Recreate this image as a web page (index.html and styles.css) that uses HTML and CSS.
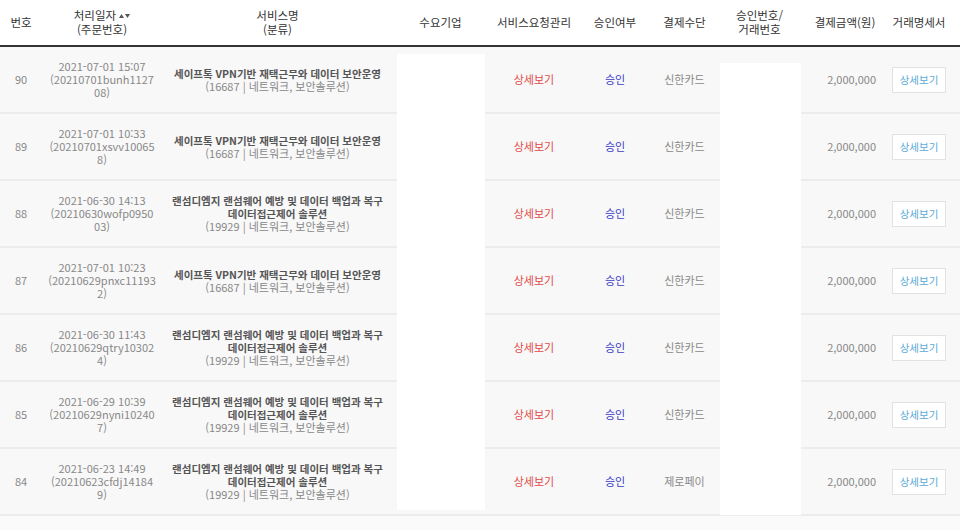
FILE: index.html
```html
<!DOCTYPE html>
<html lang="ko">
<head>
<meta charset="utf-8">
<title>주문 목록</title>
<link rel="stylesheet" href="styles.css">
</head>
<body>
<div class="wrap">
  <table class="list">
    <colgroup>
      <col class="c-no"><col class="c-date"><col class="c-svc"><col class="c-corp"><col class="c-req">
      <col class="c-ok"><col class="c-pay"><col class="c-appr"><col class="c-amt"><col class="c-doc">
    </colgroup>
    <thead>
      <tr>
        <th>번호</th>
        <th>처리일자 <span class="sort"><svg width="5" height="4" viewBox="0 0 5 4"><path d="M0 4L2.5 0L5 4Z"/></svg><svg width="5" height="4" viewBox="0 0 5 4"><path d="M0 0L2.5 4L5 0Z"/></svg></span><br>(주문번호)</th>
        <th>서비스명<br>(분류)</th>
        <th>수요기업</th>
        <th>서비스요청관리</th>
        <th>승인여부</th>
        <th>결제수단</th>
        <th>승인번호/<br>거래번호</th>
        <th>결제금액(원)</th>
        <th class="doc">거래명세서</th>
      </tr>
    </thead>
    <tbody>
      <tr>
        <td class="num">90</td>
        <td class="date">2021-07-01 15:07<br>(20210701bunh1127<br>08)</td>
        <td class="svc"><strong>세이프톡 VPN기반 재택근무와 데이터 보안운영</strong><br>(16687 | 네트워크, 보안솔루션)</td>
        <td></td>
        <td><a class="red">상세보기</a></td>
        <td><span class="blue">승인</span></td>
        <td class="gray">신한카드</td>
        <td></td>
        <td class="amt">2,000,000</td>
        <td class="doc"><button class="btn">상세보기</button></td>
      </tr>
      <tr>
        <td class="num">89</td>
        <td class="date">2021-07-01 10:33<br>(20210701xsvv10065<br>8)</td>
        <td class="svc"><strong>세이프톡 VPN기반 재택근무와 데이터 보안운영</strong><br>(16687 | 네트워크, 보안솔루션)</td>
        <td></td>
        <td><a class="red">상세보기</a></td>
        <td><span class="blue">승인</span></td>
        <td class="gray">신한카드</td>
        <td></td>
        <td class="amt">2,000,000</td>
        <td class="doc"><button class="btn">상세보기</button></td>
      </tr>
      <tr>
        <td class="num">88</td>
        <td class="date">2021-06-30 14:13<br>(20210630wofp0950<br>03)</td>
        <td class="svc"><strong>랜섬디엠지 랜섬웨어 예방 및 데이터 백업과 복구<br>데이터접근제어 솔루션</strong><br>(19929 | 네트워크, 보안솔루션)</td>
        <td></td>
        <td><a class="red">상세보기</a></td>
        <td><span class="blue">승인</span></td>
        <td class="gray">신한카드</td>
        <td></td>
        <td class="amt">2,000,000</td>
        <td class="doc"><button class="btn">상세보기</button></td>
      </tr>
      <tr>
        <td class="num">87</td>
        <td class="date">2021-07-01 10:23<br>(20210629pnxc11193<br>2)</td>
        <td class="svc"><strong>세이프톡 VPN기반 재택근무와 데이터 보안운영</strong><br>(16687 | 네트워크, 보안솔루션)</td>
        <td></td>
        <td><a class="red">상세보기</a></td>
        <td><span class="blue">승인</span></td>
        <td class="gray">신한카드</td>
        <td></td>
        <td class="amt">2,000,000</td>
        <td class="doc"><button class="btn">상세보기</button></td>
      </tr>
      <tr>
        <td class="num">86</td>
        <td class="date">2021-06-30 11:43<br>(20210629qtry10302<br>4)</td>
        <td class="svc"><strong>랜섬디엠지 랜섬웨어 예방 및 데이터 백업과 복구<br>데이터접근제어 솔루션</strong><br>(19929 | 네트워크, 보안솔루션)</td>
        <td></td>
        <td><a class="red">상세보기</a></td>
        <td><span class="blue">승인</span></td>
        <td class="gray">신한카드</td>
        <td></td>
        <td class="amt">2,000,000</td>
        <td class="doc"><button class="btn">상세보기</button></td>
      </tr>
      <tr>
        <td class="num">85</td>
        <td class="date">2021-06-29 10:39<br>(20210629nyni10240<br>7)</td>
        <td class="svc"><strong>랜섬디엠지 랜섬웨어 예방 및 데이터 백업과 복구<br>데이터접근제어 솔루션</strong><br>(19929 | 네트워크, 보안솔루션)</td>
        <td></td>
        <td><a class="red">상세보기</a></td>
        <td><span class="blue">승인</span></td>
        <td class="gray">신한카드</td>
        <td></td>
        <td class="amt">2,000,000</td>
        <td class="doc"><button class="btn">상세보기</button></td>
      </tr>
      <tr>
        <td class="num">84</td>
        <td class="date">2021-06-23 14:49<br>(20210623cfdj14184<br>9)</td>
        <td class="svc"><strong>랜섬디엠지 랜섬웨어 예방 및 데이터 백업과 복구<br>데이터접근제어 솔루션</strong><br>(19929 | 네트워크, 보안솔루션)</td>
        <td></td>
        <td><a class="red">상세보기</a></td>
        <td><span class="blue">승인</span></td>
        <td class="gray">제로페이</td>
        <td></td>
        <td class="amt">2,000,000</td>
        <td class="doc"><button class="btn">상세보기</button></td>
      </tr>
      <tr class="next"><td colspan="10"></td></tr>
    </tbody>
  </table>
  <div class="mask mask-corp"></div>
  <div class="mask mask-appr"></div>
</div>
</body>
</html>
```
FILE: styles.css
```css
html, body {
  margin: 0;
  padding: 0;
  background: #fff;
}
body {
  font-family: "Noto Sans CJK KR", "Noto Sans", sans-serif;
  color: #555;
}
.wrap {
  position: relative;
  width: 960px;
}
.list {
  width: 960px;
  border-collapse: collapse;
  table-layout: fixed;
}
.c-no { width: 42px; }
.c-date { width: 120px; }
.c-svc { width: 231px; }
.c-corp { width: 95px; }
.c-req { width: 92px; }
.c-ok { width: 70px; }
.c-pay { width: 69px; }
.c-appr { width: 81px; }
.c-amt { width: 90px; }
.c-doc { width: 70px; }

.list th {
  height: 43px;
  padding: 0 0 2px;
  font-size: 11.5px;
  line-height: 14px;
  font-weight: normal;
  color: #333;
  text-align: center;
  vertical-align: middle;
  border-bottom: 2px solid #333;
}
.list th.doc { padding-right: 12px; }
.sort {
  display: inline-flex;
  gap: 1px;
  vertical-align: 2px;
}
.sort svg { fill: #555; }

.list td {
  height: 65px;
  padding: 0;
  background: #f8f8f8;
  border-bottom: 2px solid #ececec;
  font-size: 11px;
  line-height: 13px;
  color: #888;
  text-align: center;
  vertical-align: middle;
}
.list td.svc { color: #888; }
.list td.svc strong { color: #555; font-weight: bold; font-size: 10.5px; }
.list td.num { color: #888; }
.list td.amt { text-align: right; padding-right: 14px; color: #888; }
.list td.doc { padding-right: 12px; }
.red { color: #e04848; }
.blue { color: #3c3cc8; }
.gray { color: #777; }
.btn {
  font: inherit;
  font-size: 10.5px;
  color: #5aaad8;
  background: #fff;
  border: 1px solid #e2e2e2;
  padding: 0 7px;
  height: 26px;
  cursor: pointer;
}
.list tr.next td {
  height: 14px;
  background: #fafafa;
  border-bottom: 0;
}
.mask {
  position: absolute;
  background: #fff;
}
.mask-corp { left: 397px; top: 54px; width: 88px; height: 456px; }
.mask-appr { left: 720px; top: 63px; width: 81px; height: 452px; }
```
